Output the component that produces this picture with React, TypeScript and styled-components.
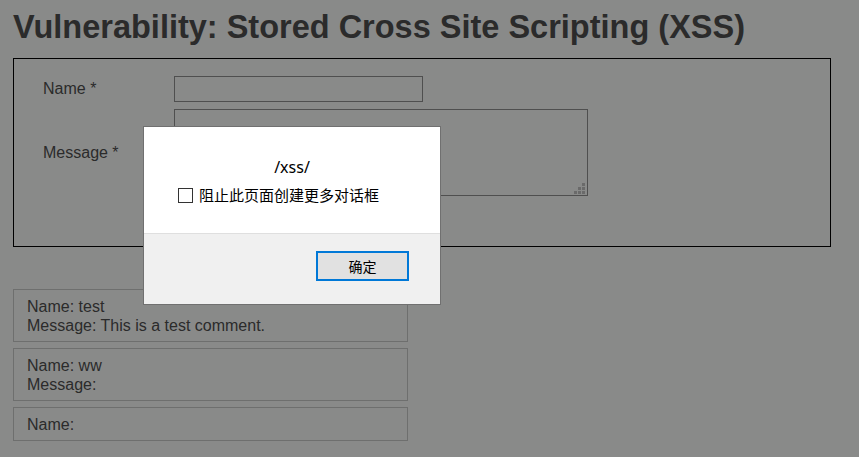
import React from 'react';
import styled, { createGlobalStyle } from 'styled-components';

const GlobalStyle = createGlobalStyle`
  html, body {
    margin: 0;
    padding: 0;
    background: #898a89;
  }
  body {
    font-family: "Liberation Sans", Arial, sans-serif;
    color: #2b2b2b;
    overflow: hidden;
  }
`;

const Page = styled.div`
  position: relative;
  width: 859px;
  height: 457px;
  padding: 9px 0 0 13px;
  box-sizing: border-box;
`;

const Title = styled.h1`
  margin: 0 0 13px;
  font-size: 32.5px;
  line-height: 36px;
  font-weight: bold;
  color: #2b2b2b;
`;

const FormBox = styled.div`
  width: 818px;
  height: 189px;
  box-sizing: border-box;
  border: 1px solid #000;
  padding: 17px 0 0 29px;
  display: grid;
  grid-template-columns: 131px auto;
  grid-auto-rows: min-content;
  row-gap: 7px;
  align-items: center;
`;

const Label = styled.label`
  font-size: 16px;
  color: #2b2b2b;
`;

const TextInput = styled.input`
  width: 249px;
  height: 26px;
  box-sizing: border-box;
  margin: 0;
  border: 1px solid #4f4f4f;
  background: transparent;
  outline: none;
`;

const AreaWrap = styled.div`
  position: relative;
  width: 414px;
  height: 87px;
`;

const TextArea = styled.textarea`
  width: 100%;
  height: 100%;
  box-sizing: border-box;
  margin: 0;
  display: block;
  border: 1px solid #4f4f4f;
  background: transparent;
  resize: none;
  outline: none;
`;

const Grip = styled.svg`
  position: absolute;
  right: 3px;
  bottom: 2px;
`;

const Comments = styled.div`
  margin-top: 42px;
  display: flex;
  flex-direction: column;
  gap: 6px;
`;

const Comment = styled.div`
  width: 395px;
  box-sizing: border-box;
  border: 1px solid #6e6f6e;
  padding: 7px 13px 6px;
  font-size: 16px;
  line-height: 19px;
  color: #2b2b2b;
`;

const Dialog = styled.div`
  position: absolute;
  left: 143px;
  top: 126px;
  width: 298px;
  height: 179px;
  box-sizing: border-box;
  border: 1px solid #707070;
  background: #f0f0f0;
  display: flex;
  flex-direction: column;
  font-family: "Noto Sans", "Noto Sans CJK SC", sans-serif;
  color: #000;
`;

const DialogBody = styled.div`
  height: 107px;
  background: #fff;
  border-bottom: 1px solid #dfdfdf;
  padding: 30px 0 0 34px;
  box-sizing: border-box;
`;

const Message = styled.div`
  text-align: center;
  font-size: 16px;
  line-height: 20px;
  padding-right: 34px;
`;

const CheckRow = styled.label`
  margin-top: 8px;
  display: flex;
  align-items: center;
  gap: 6px;
  font-family: "Noto Sans CJK SC", sans-serif;
  font-size: 15px;
  line-height: 20px;
`;

const Box = styled.span`
  width: 13px;
  height: 13px;
  border: 1px solid #333;
  background: #fff;
  flex: none;
`;

const DialogFooter = styled.div`
  flex: 1;
  display: flex;
  justify-content: flex-end;
  align-items: flex-start;
  padding: 17px 31px 0 0;
`;

const OkButton = styled.button`
  width: 93px;
  height: 30px;
  box-sizing: border-box;
  border: 2px solid #0078d7;
  background: #e1e1e1;
  font-family: "Noto Sans CJK SC", sans-serif;
  font-size: 14px;
  color: #000;
  padding: 0;
`;

const comments = [
  ['Name: test', 'Message: This is a test comment.'],
  ['Name: ww', 'Message:'],
  ['Name:'],
];

export default function App() {
  return (
    <Page>
      <GlobalStyle />
      <Title>Vulnerability: Stored Cross Site Scripting (XSS)</Title>
      <FormBox>
        <Label>Name *</Label>
        <TextInput />
        <Label>Message *</Label>
        <AreaWrap>
          <TextArea />
          <Grip width="11" height="11" viewBox="0 0 11 11">
            <g fill="#6a6a6a">
              <rect x="8" y="0" width="3" height="3" />
              <rect x="4" y="4" width="3" height="3" />
              <rect x="8" y="4" width="3" height="3" />
              <rect x="0" y="8" width="3" height="3" />
              <rect x="4" y="8" width="3" height="3" />
              <rect x="8" y="8" width="3" height="3" />
            </g>
          </Grip>
        </AreaWrap>
      </FormBox>
      <Comments>
        {comments.map((lines, i) => (
          <Comment key={i}>
            {lines.map((l) => (
              <div key={l}>{l}</div>
            ))}
          </Comment>
        ))}
      </Comments>
      <Dialog>
        <DialogBody>
          <Message>/xss/</Message>
          <CheckRow>
            <Box />
            阻止此页面创建更多对话框
          </CheckRow>
        </DialogBody>
        <DialogFooter>
          <OkButton>确定</OkButton>
        </DialogFooter>
      </Dialog>
    </Page>
  );
}
